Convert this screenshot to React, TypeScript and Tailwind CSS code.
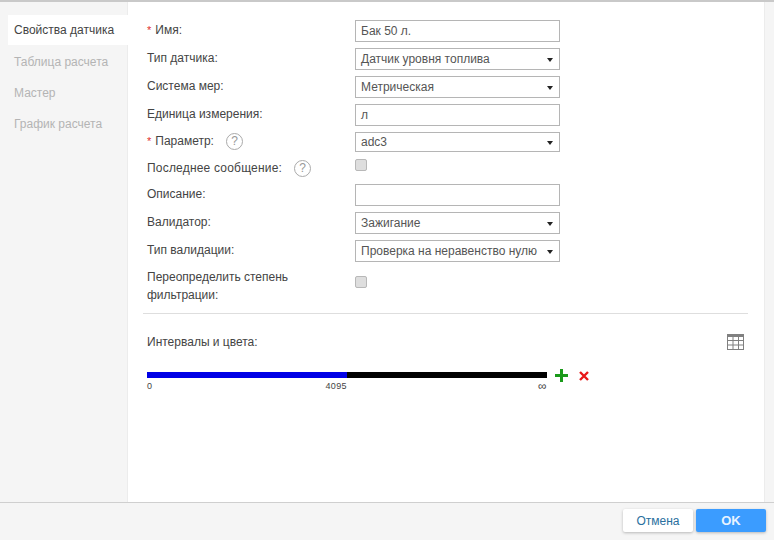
const tabs = ['Таблица расчета', 'Мастер', 'График расчета'];

function Arrow() {
  return <span className="ml-auto mr-[6px] mt-[2px] h-0 w-0 shrink-0 border-x-[3.5px] border-t-[4px] border-x-transparent border-t-[#222]" />;
}

function Help() {
  return (
    <span className="flex h-[17px] w-[17px] shrink-0 items-center justify-center rounded-full border border-[#aaa] text-[12px] leading-none text-[#999]">
      ?
    </span>
  );
}

function Req() {
  return <span className="mr-[4px] text-[11px] text-[#e03030]">*</span>;
}

function Field({ value }: { value?: string }) {
  return (
    <div className="flex h-[22px] w-[205px] items-center border border-[#b5b5b5] bg-white pl-[5px] text-[12px] text-[#555]">
      {value}
    </div>
  );
}

function Select({ value, short }: { value: string; short?: boolean }) {
  return (
    <div
      className={`flex w-[205px] items-center border border-[#b5b5b5] bg-white pl-[5px] text-[12px] text-[#555] ${short ? 'h-[20px]' : 'h-[22px]'}`}
    >
      <span className="whitespace-nowrap">{value}</span>
      <Arrow />
    </div>
  );
}

function Check() {
  return <div className="h-[12px] w-[12px] rounded-[2px] border border-[#b8b8b8] bg-[#dedede]" />;
}

function Row({ label, children, h = 'h-[28px]' }: { label: React.ReactNode; children: React.ReactNode; h?: string }) {
  return (
    <div className={`flex items-center ${h}`}>
      <div className="flex w-[208px] shrink-0 items-center pb-[2px] text-[12px] text-[#444]">{label}</div>
      {children}
    </div>
  );
}

export default function App() {
  return (
    <div className="flex h-[540px] w-[774px] flex-col overflow-hidden bg-[#f5f5f5] font-['Liberation_Sans',Arial,sans-serif]">
      <div className="h-[2px] shrink-0 bg-[#c9c9c9]" />

      <div className="flex min-h-0 flex-1">
        {/* Tabs */}
        <div className="w-[128px] shrink-0 border-r border-[#ececec] pl-[8px] pt-[13px] text-[12px]">
          <div className="mb-px flex h-[30px] w-[120px] items-center bg-white pl-[6px] text-[#444]">Свойства датчика</div>
          {tabs.map((tab) => (
            <div key={tab} className="flex h-[31px] items-center pl-[6px] text-[#b4b4b4]">
              {tab}
            </div>
          ))}
        </div>

        {/* Form */}
        <div className="flex-1 bg-white pl-[19px] pt-[15px]">
          <Row label={<><Req />Имя:</>}>
            <Field value="Бак 50 л." />
          </Row>
          <Row label="Тип датчика:">
            <Select value="Датчик уровня топлива" />
          </Row>
          <Row label="Система мер:">
            <Select value="Метрическая" />
          </Row>
          <Row label="Единица измерения:">
            <Field value="л" />
          </Row>
          <Row label={<><Req />Параметр:<span className="ml-[12px]"><Help /></span></>} h="h-[26px]">
            <Select value="adc3" short />
          </Row>
          <Row
            label={
              <div className="mt-[8px] flex items-center">
                <span className="tracking-[0.2px]">Последнее сообщение:</span>
                <span className="ml-[12px]"><Help /></span>
              </div>
            }
            h="h-[20px]"
          >
            <Check />
          </Row>
          <div className="h-[6px]" />
          <Row label="Описание:">
            <Field />
          </Row>
          <Row label="Валидатор:">
            <Select value="Зажигание" />
          </Row>
          <Row label="Тип валидации:">
            <Select value="Проверка на неравенство нулю" />
          </Row>
          <Row label={<span className="mt-[9px] block w-[170px] leading-[18px]">Переопределить степень фильтрации:</span>} h="h-[34px]">
            <Check />
          </Row>

          <div className="-ml-[4px] mt-[14px] h-px w-[605px] bg-[#dedede]" />

          <div className="flex w-[597px] items-center pt-[19px]">
            <span className="text-[12px] text-[#444]">Интервалы и цвета:</span>
            <svg className="ml-auto" width="17" height="16" viewBox="0 0 17 16" fill="none" stroke="#808080">
              <rect x="0.5" y="0.5" width="16" height="15" />
              <path d="M0 1.5H17M0 2.5H17M0 6.5H17M0 11H17M6 2V16M11.5 2V16" />
            </svg>
          </div>

          <div className="mt-[21px] flex items-start">
            <div className="w-[400px]">
              <div className="flex h-[6px]">
                <div className="w-[200px] bg-[#0000e6]" />
                <div className="flex-1 bg-black" />
              </div>
              <div className="mt-[3px] flex text-[9px] leading-[11px] tracking-[0.4px] text-[#444]">
                <div className="flex w-[200px] justify-between">
                  <span>0</span>
                  <span>4095</span>
                </div>
                <div className="flex-1 text-right text-[12px]">∞</div>
              </div>
            </div>
            <svg className="-mt-[3px] ml-[8px]" width="13" height="13" viewBox="0 0 13 13">
              <path d="M5 0H8V5H13V8H8V13H5V8H0V5H5Z" fill="#1a9a1a" />
            </svg>
            <svg className="-mt-[1px] ml-[11px]" width="10" height="10" viewBox="0 0 10 10">
              <path d="M1 1L9 9M9 1L1 9" stroke="#e81818" strokeWidth="2.4" />
            </svg>
          </div>
        </div>

        <div className="w-[10px] shrink-0 border-l border-[#ececec] bg-[#f5f5f5]" />
      </div>

      {/* Footer */}
      <div className="flex h-[38px] shrink-0 items-start justify-end border-t border-[#cfcfcf] pr-[8px] pt-[6px]">
        <button className="h-[23px] w-[70px] rounded-[2px] bg-white text-[12px] text-[#2a6f9e] shadow-[0_1px_3px_rgba(0,0,0,0.25)]">
          Отмена
        </button>
        <button className="ml-[3px] h-[23px] w-[70px] rounded-[2px] bg-[#3b9cff] text-[13px] font-bold text-[#e8f3ff] shadow-[0_1px_3px_rgba(0,0,0,0.25)]">
          OK
        </button>
      </div>
    </div>
  );
}
